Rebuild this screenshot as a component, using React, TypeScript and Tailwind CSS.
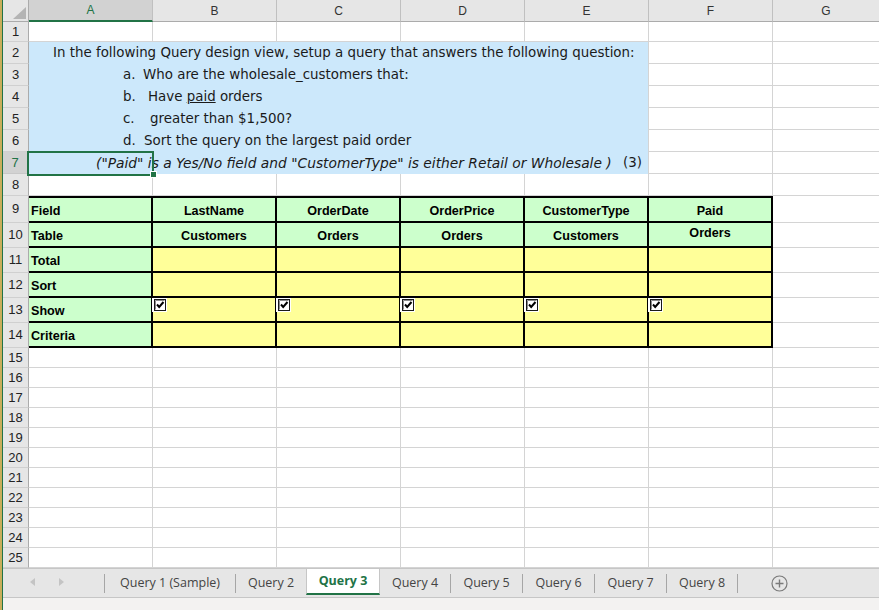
import React from "react";

const COLS = ["A", "B", "C", "D", "E", "F", "G"];

function Cell({ last = false }: { last?: boolean }) {
  return <div className={last ? "border-b border-[#d4d4d4] bg-white" : "border-r border-b border-[#d4d4d4] bg-white"} />;
}

function RowHead({ n, active = false }: { n: number; active?: boolean }) {
  return (
    <div
      className={
        active
          ? "flex items-center justify-center bg-[#d2d2d2] border-b border-b-[#c8c8c8] border-r-2 border-r-[#217346] text-[#217346] text-[13px] [font-family:'Liberation_Sans',Arial,sans-serif]"
          : "flex items-center justify-center bg-[#e6e6e6] border-b border-b-[#d0d0d0] border-r border-r-[#ababab] text-[#222] text-[13px] [font-family:'Liberation_Sans',Arial,sans-serif]"
      }
    >
      {n}
    </div>
  );
}

function CheckBox() {
  return (
    <svg width="15" height="14" viewBox="0 0 15 14" className="-ml-[1px] block">
      <rect x="0" y="0" width="15" height="14" fill="#ffffff" />
      <rect x="2.5" y="1.5" width="11" height="11" fill="#ffffff" stroke="#1a1a1a" strokeWidth="1" />
      <path d="M3.5 11.5 V2.5 H12.5" fill="none" stroke="#8a8a8a" strokeWidth="1" />
      <path d="M5 6.5 L7.2 9 L11.5 4" fill="none" stroke="#000000" strokeWidth="2" />
    </svg>
  );
}

function BlueBlock() {
  return (
    <div className="col-span-5 row-span-6 bg-[#cce8fb] border-r border-[#d4d4d4] flex flex-col text-[13.4px] text-[#1a1a1a] [font-family:'DejaVu_Sans',Verdana,sans-serif] whitespace-nowrap overflow-hidden">
      <div className="h-[22px] flex items-center pl-[24px]">
        In the following Query design view, setup a query that answers the following question:
      </div>
      <div className="h-[22px] flex items-center pl-[94px]">
        <span className="inline-block w-[20px]">a.</span>Who are the wholesale_customers that:
      </div>
      <div className="h-[22px] flex items-center pl-[94px]">
        <span className="inline-block w-[25px]">b.</span>Have&nbsp;<span className="underline">paid</span>&nbsp;orders
      </div>
      <div className="h-[22px] flex items-center pl-[94px]">
        <span className="inline-block w-[27px]">c.</span>greater than $1,500?
      </div>
      <div className="h-[22px] flex items-center pl-[94px]">
        <span className="inline-block w-[21px]">d.</span>Sort the query on the largest paid order
      </div>
      <div className="h-[22px] flex items-center pl-[67px]">
        <span className="inline-block w-[527px] italic text-[13.8px]">("Paid" is a Yes/No field and "CustomerType" is either Retail or Wholesale )</span>
        <span>(3)</span>
      </div>
    </div>
  );
}

const TABLE_HEAD = ["LastName", "OrderDate", "OrderPrice", "CustomerType", "Paid"];
const TABLE_SRC = ["Customers", "Orders", "Orders", "Customers", "Orders"];
const LABELS = ["Field", "Table", "Total", "Sort", "Show", "Criteria"];

function TableBlock() {
  const cells: React.ReactNode[] = [];
  LABELS.forEach((label, r) => {
    const top = r === 0 ? " border-t-2" : "";
    cells.push(
      <div
        key={`l${r}`}
        className={"bg-[#ccffcc] border-r-2 border-b-2 border-black flex items-center pl-[2px] pt-[3px]" + top}
      >
        {label}
      </div>
    );
    for (let c = 0; c < 5; c++) {
      if (r === 0 || r === 1) {
        const txt = r === 0 ? TABLE_HEAD[c] : TABLE_SRC[c];
        const high = r === 1 && c === 4;
        cells.push(
          <div
            key={`c${r}-${c}`}
            className={
              "bg-[#ccffcc] border-r-2 border-b-2 border-black flex justify-center " +
              (high ? "items-start pt-[1px]" : "items-center pt-[3px]") +
              top
            }
          >
            {txt}
          </div>
        );
      } else if (r === 4) {
        cells.push(
          <div key={`c${r}-${c}`} className="bg-[#ffff99] border-r-2 border-b-2 border-black flex items-start">
            <CheckBox />
          </div>
        );
      } else {
        cells.push(<div key={`c${r}-${c}`} className="bg-[#ffff99] border-r-2 border-b-2 border-black" />);
      }
    }
  });
  return (
    <div className="col-span-6 row-span-6 grid grid-cols-[repeat(6,124px)] grid-rows-[27px_repeat(5,25px)] text-[12.6px] font-bold text-black [font-family:'Liberation_Sans',Arial,sans-serif]">
      {cells}
    </div>
  );
}

function Sheet() {
  const items: React.ReactNode[] = [];
  items.push(
    <div key="corner" className="bg-[#e6e6e6] border-r border-b border-[#ababab] flex items-end justify-end pr-[2px] pb-[2px]">
      <svg width="13" height="12" viewBox="0 0 13 12">
        <polygon points="13,0 13,12 0,12" fill="#b4b4b4" />
      </svg>
    </div>
  );
  COLS.forEach((c, i) => {
    const sel = c === "A";
    items.push(
      <div
        key={`h${c}`}
        className={
          sel
            ? "bg-[#d2d2d2] border-r border-r-[#c0c0c0] border-b-2 border-b-[#217346] flex items-center justify-center text-[12px] text-[#217346] [font-family:'Liberation_Sans',Arial,sans-serif]"
            : "bg-[#e6e6e6] border-b border-b-[#ababab] flex items-center justify-center text-[12px] text-[#333] [font-family:'Liberation_Sans',Arial,sans-serif] " +
              (i < 6 ? "border-r border-r-[#c0c0c0]" : "")
        }
      >
        {c}
      </div>
    );
  });
  for (let r = 1; r <= 25; r++) {
    items.push(<RowHead key={`r${r}`} n={r} active={r === 7} />);
    if (r >= 2 && r <= 7) {
      if (r === 2) items.push(<BlueBlock key="blue" />);
      items.push(<Cell key={`c${r}F`} />);
      items.push(<Cell key={`c${r}G`} last />);
    } else if (r >= 9 && r <= 14) {
      if (r === 9) items.push(<TableBlock key="table" />);
      items.push(<Cell key={`c${r}G`} last />);
    } else {
      COLS.forEach((c, i) => items.push(<Cell key={`c${r}${c}`} last={i === 6} />));
    }
  }
  return (
    <div className="relative h-[568px] grid grid-cols-[26px_repeat(6,124px)_1fr] grid-rows-[22px_20px_repeat(7,22px)_27px_repeat(5,25px)_repeat(11,20px)] overflow-hidden">
      {items}
      <div className="absolute left-[24px] top-[151px] w-[127px] h-[25px] border-2 border-[#217346] pointer-events-none" />
      <div className="absolute left-[147px] top-[171px] w-[7px] h-[7px] bg-[#217346] border border-white" />
    </div>
  );
}

function Sep() {
  return <div className="w-px h-[19px] bg-[#a6a6a6] self-center" />;
}

function Tab({ label, w }: { label: string; w: string }) {
  return <div className={`${w} flex items-center justify-center text-[12.5px] text-[#444]`}>{label}</div>;
}

function TabBar() {
  return (
    <div className="h-[30px] bg-[#e6e6e6] border-t border-b border-[#c6c6c6] flex items-stretch [font-family:'Open_Sans','Noto_Sans',sans-serif]">
      <div className="w-[101px] relative">
        <svg width="5" height="8" viewBox="0 0 5 8" className="absolute left-[27px] top-[9px]">
          <polygon points="5,0 5,8 0,4" fill="#c4c4c4" />
        </svg>
        <svg width="5" height="8" viewBox="0 0 5 8" className="absolute left-[56px] top-[9px]">
          <polygon points="0,0 0,8 5,4" fill="#c4c4c4" />
        </svg>
      </div>
      <Sep />
      <Tab label="Query 1 (Sample)" w="w-[130px]" />
      <Sep />
      <Tab label="Query 2" w="w-[70px]" />
      <div className="w-[74px] h-[26px] self-start bg-white border-l border-r border-[#c6c6c6] border-b-2 border-b-[#217346] flex items-center justify-center text-[12.5px] font-bold text-[#217346]">
        Query 3
      </div>
      <Tab label="Query 4" w="w-[70px]" />
      <Sep />
      <Tab label="Query 5" w="w-[71px]" />
      <Sep />
      <Tab label="Query 6" w="w-[71px]" />
      <Sep />
      <Tab label="Query 7" w="w-[71px]" />
      <Sep />
      <Tab label="Query 8" w="w-[70px]" />
      <Sep />
      <div className="ml-[33px] flex items-center">
        <svg width="17" height="17" viewBox="0 0 17 17">
          <circle cx="8.5" cy="8.5" r="7.5" fill="none" stroke="#7a7a7a" strokeWidth="1.2" />
          <path d="M8.5 4.5 V12.5 M4.5 8.5 H12.5" stroke="#7a7a7a" strokeWidth="1.4" />
        </svg>
      </div>
    </div>
  );
}

export default function App() {
  return (
    <div className="w-[879px] h-[610px] flex overflow-hidden bg-white [font-family:'Liberation_Sans',Arial,sans-serif]">
      <div className="w-[3px] h-full flex">
        <div className="w-[2px] h-full bg-[#c9ae5a]" />
        <div className="w-px h-full bg-[#217346]" />
      </div>
      <div className="flex-1 flex flex-col min-w-0">
        <Sheet />
        <TabBar />
        <div className="flex-1 bg-[#f3f2f1]" />
      </div>
    </div>
  );
}
